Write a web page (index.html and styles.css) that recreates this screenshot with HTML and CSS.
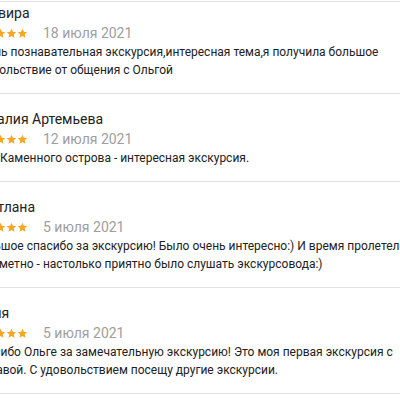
FILE: index.html
```html
<!DOCTYPE html>
<html lang="ru">
<head>
<meta charset="utf-8">
<link rel="stylesheet" href="styles.css">
</head>
<body>
<svg width="0" height="0" class="defs">
  <defs>
    <symbol id="star" viewBox="0 0 24 24"><path d="M12 1.5l3.1 6.7 7.3.8-5.5 4.9 1.6 7.2L12 17.4l-6.5 3.7 1.6-7.2L1.6 9l7.3-.8z"/></symbol>
  </defs>
</svg>
<div class="reviews">
  <div class="review first">
    <div class="name">Эльвира</div>
    <div class="meta">
      <span class="stars"><svg><use href="#star"/></svg><svg><use href="#star"/></svg><svg><use href="#star"/></svg><svg><use href="#star"/></svg><svg><use href="#star"/></svg></span>
      <span class="date">18 июля 2021</span>
    </div>
    <p class="text">Очень познавательная экскурсия,интересная тема,я получила большое удовольствие от общения с Ольгой</p>
  </div>
  <div class="review">
    <div class="name">Наталия Артемьева</div>
    <div class="meta">
      <span class="stars"><svg><use href="#star"/></svg><svg><use href="#star"/></svg><svg><use href="#star"/></svg><svg><use href="#star"/></svg><svg><use href="#star"/></svg></span>
      <span class="date">12 июля 2021</span>
    </div>
    <p class="text">Мир Каменного острова - интересная экскурсия.</p>
  </div>
  <div class="review">
    <div class="name">Светлана</div>
    <div class="meta">
      <span class="stars"><svg><use href="#star"/></svg><svg><use href="#star"/></svg><svg><use href="#star"/></svg><svg><use href="#star"/></svg><svg><use href="#star"/></svg></span>
      <span class="date">5 июля 2021</span>
    </div>
    <p class="text">Большое спасибо за экскурсию! Было очень интересно:) И время пролетело незаметно - настолько приятно было слушать экскурсовода:)</p>
  </div>
  <div class="review">
    <div class="name">Юлия</div>
    <div class="meta">
      <span class="stars"><svg><use href="#star"/></svg><svg><use href="#star"/></svg><svg><use href="#star"/></svg><svg><use href="#star"/></svg><svg><use href="#star"/></svg></span>
      <span class="date">5 июля 2021</span>
    </div>
    <p class="text">Спасибо Ольге за замечательную экскурсию! Это моя первая экскурсия с Журавой. С удовольствием посещу другие экскурсии.</p>
  </div>
</div>
</body>
</html>
```

FILE: styles.css
```css
html, body {
  margin: 0;
  padding: 0;
  background: #ffffff;
  overflow: hidden;
}
body {
  font-family: Roboto, "Noto Sans", sans-serif;
  color: #212121;
}
.defs {
  position: absolute;
}
.reviews {
  margin-top: 1px;
  margin-left: -27px;
  width: 445px;
  border-top: 1px solid #e2e2e2;
}
.review {
  padding: 15px 0 14px;
  border-bottom: 1px solid #e2e2e2;
}
.review.first {
  padding-top: 1px;
}
.name {
  font-size: 14px;
  line-height: 20px;
  color: #222222;
}
.meta {
  display: flex;
  align-items: center;
  height: 20px;
  gap: 15px;
}
.stars {
  display: flex;
  gap: 0;
}
.stars svg {
  width: 11px;
  height: 11px;
  fill: #f5a623;
}
.date {
  font-size: 14px;
  color: #9e9e9e;
}
.text {
  margin: 0;
  font-size: 12px;
  line-height: 18px;
  color: #212121;
}
```
